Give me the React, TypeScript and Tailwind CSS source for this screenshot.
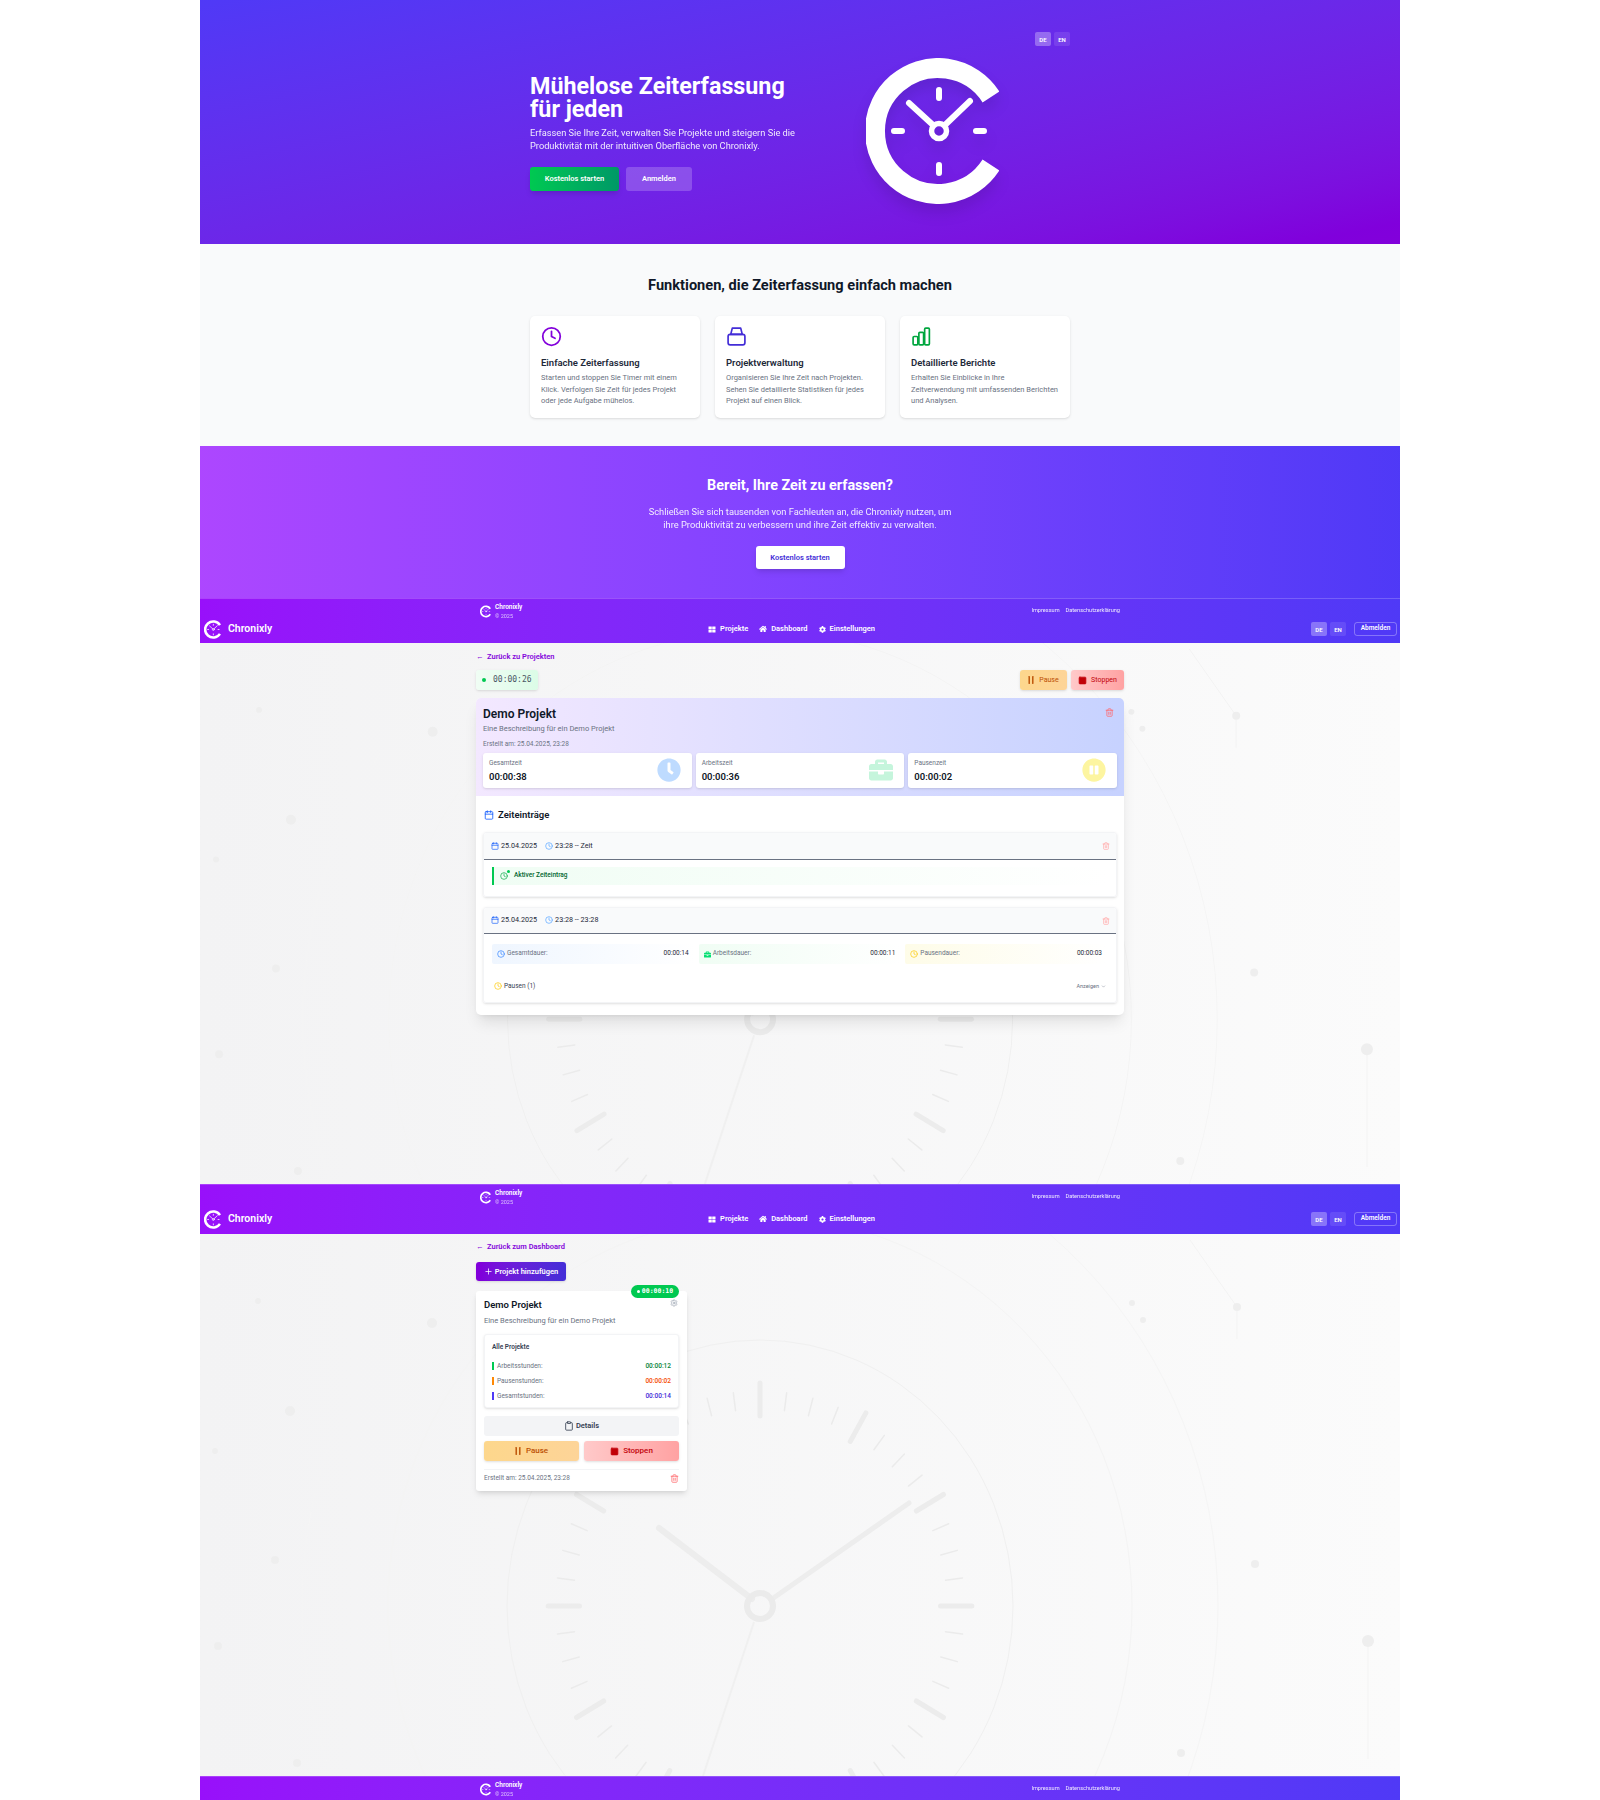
import { Calendar, Clock, Plus, Square, Trash2, Settings, Clipboard, ChevronDown } from 'lucide-react';
import { FaBriefcase, FaClock, FaCog, FaHome, FaPauseCircle, FaThLarge } from 'react-icons/fa';

// The C shaped clock, used big in the hero and small in the nav and footer
function LogoMark({ className }: { className: string }) {
  return (
    <svg viewBox="866 58 133 146" className={className} fill="none" stroke="#fff" strokeLinecap="round">
      <path d="M991 97 A63 63 0 1 0 991 165" strokeWidth="20" strokeLinecap="butt" />
      <path d="M939 90v8M939 165v8M894 131h8M976 131h8" strokeWidth="6" />
      <path d="M909 103 L933 125M970 101 L945 125" strokeWidth="6" />
      <circle cx="939" cy="131" r="7.5" strokeWidth="5.5" />
    </svg>
  );
}

function PauseBars({ className }: { className: string }) {
  return (
    <svg viewBox="0 0 6 8" className={className} fill="currentColor">
      <rect x="0.5" y="0" width="1.4" height="8" rx="0.4" />
      <rect x="4.1" y="0" width="1.4" height="8" rx="0.4" />
    </svg>
  );
}

// Faint clock and dots behind the two app pages
function Watermark({ cy }: { cy: number }) {
  const cx = 560;
  const ticks = Array.from({ length: 48 }, (_, i) => i);
  const dots = [
    [232, 89, 5], [90, 177, 5], [75, 326, 4], [15, 217, 3], [18, 412, 4], [97, 529, 4], [58, 67, 3],
    [1037, 73, 4], [1055, 330, 4], [1168, 407, 6], [981, 519, 4], [932, 69, 3], [943, 86, 3],
  ];
  return (
    <svg viewBox="0 0 1200 542" className="absolute inset-0 w-full h-full" fill="none">
      <ellipse cx={cx} cy={cy} rx="253" ry="266" stroke="#f0f0f0" strokeWidth="1" />
      <ellipse cx={cx} cy={cy} rx="372" ry="390" stroke="#f4f4f4" strokeWidth="1" />
      <ellipse cx={cx} cy={cy} rx="458" ry="480" stroke="#f5f5f5" strokeWidth="1" />
      <path d="M1037 73 L990 6M1037 73 V105M1168 407 V525" stroke="#f3f3f3" strokeWidth="1" />
      {ticks.map((i) => {
        const a = (i * 7.5 * Math.PI) / 180;
        const major = i % 4 === 0;
        const r1 = major ? 190 : 197;
        const r2 = major ? 223 : 215;
        return (
          <line
            key={i}
            x1={cx + Math.sin(a) * r1 * 0.95}
            y1={cy - Math.cos(a) * r1}
            x2={cx + Math.sin(a) * r2 * 0.95}
            y2={cy - Math.cos(a) * r2}
            stroke={major ? '#ececec' : '#ebebeb'}
            strokeWidth={major ? 5 : 1.5}
            strokeLinecap="round"
          />
        );
      })}
      <path d={`M${cx - 8} ${cy - 7} L${cx - 101} ${cy - 78}`} stroke="#ededed" strokeWidth="6" strokeLinecap="round" />
      <path d={`M${cx + 12} ${cy - 7} L${cx + 149} ${cy - 103}`} stroke="#ededed" strokeWidth="5" strokeLinecap="round" />
      <path d={`M${cx - 6} ${cy + 16} L${cx - 57} ${cy + 170}`} stroke="#f0f0f0" strokeWidth="2" />
      <circle cx={cx} cy={cy} r="13" stroke="#ebebeb" strokeWidth="6" />
      {dots.map(([x, y, r]) => (
        <circle key={`${x}-${y}`} cx={x} cy={y} r={r} fill="#eeeeee" />
      ))}
    </svg>
  );
}

function FooterRow() {
  return (
    <div className="w-[648px] mx-auto px-[4px] pt-[4px] h-[23px] flex items-start justify-between text-white">
      <div className="flex items-center gap-[4px]">
        <LogoMark className="w-[11px] h-[13px]" />
        <div className="flex flex-col">
          <span className="text-[6.5px] leading-[9px] font-semibold">Chronixly</span>
          <span className="text-[5.5px] leading-[8px] opacity-70">© 2025</span>
        </div>
      </div>
      <div className="flex items-center h-[15px] gap-[6px] text-[5.6px] opacity-90">
        <span>Impressum</span>
        <span>Datenschutzerklärung</span>
      </div>
    </div>
  );
}

function LangButtons() {
  return (
    <div className="flex gap-[3px] text-white text-[6px] font-semibold">
      <span className="w-[16px] h-[14px] rounded-[2px] bg-white/30 flex items-center justify-center">DE</span>
      <span className="w-[16px] h-[14px] rounded-[2px] bg-white/10 flex items-center justify-center">EN</span>
    </div>
  );
}

function NavBar({ bottomPad }: { bottomPad: string }) {
  return (
    <div className="bg-linear-to-r from-purple-600 to-indigo-600 border-t border-white/20">
      <FooterRow />
      <div className={`flex items-center justify-between pl-[4px] pr-[3px] ${bottomPad}`}>
        <div className="flex items-center gap-[7px] text-white">
          <LogoMark className="w-[17px] h-[19px] -my-[3px]" />
          <span className="text-[10.5px] leading-[14px] font-semibold">Chronixly</span>
        </div>
        <div className="flex items-center gap-[11px] text-white text-[7.5px] font-semibold">
          <span className="flex items-center gap-[4px]"><FaThLarge className="w-[8px] h-[7px]" />Projekte</span>
          <span className="flex items-center gap-[4px]"><FaHome className="w-[8px] h-[8px]" />Dashboard</span>
          <span className="flex items-center gap-[4px]"><FaCog className="w-[7px] h-[7px]" />Einstellungen</span>
        </div>
        <div className="flex items-center gap-[8px]">
          <LangButtons />
          <span className="w-[43px] h-[14px] rounded-[3px] border border-white/30 text-white text-[6.5px] font-semibold flex items-center justify-center">Abmelden</span>
        </div>
      </div>
    </div>
  );
}

function Hero() {
  return (
    <section className="h-[244px] bg-linear-to-br from-indigo-600 to-purple-700">
      <div className="w-[540px] mx-auto pt-[32px]">
        <div className="flex justify-end">
          <LangButtons />
        </div>
        <div className="flex items-center mt-[12px]">
          <div className="flex-1 text-white pt-[3px]">
            <h1 className="text-[23.3px] leading-[23px] font-bold">Mühelose Zeiterfassung<br />für jeden</h1>
            <p className="text-[9.25px] leading-[13.5px] mt-[5px] opacity-90">
              Erfassen Sie Ihre Zeit, verwalten Sie Projekte und steigern Sie die<br />
              Produktivität mit der intuitiven Oberfläche von Chronixly.
            </p>
            <div className="flex gap-[7px] mt-[14px] text-[7.5px] font-semibold">
              <span className="w-[89px] h-[24px] rounded-[3px] bg-linear-to-r from-green-500 to-emerald-600 shadow-md flex items-center justify-center">Kostenlos starten</span>
              <span className="w-[66px] h-[24px] rounded-[3px] bg-white/20 flex items-center justify-center">Anmelden</span>
            </div>
          </div>
          <LogoMark className="w-[133px] h-[146px] mr-[71px] drop-shadow-xl" />
        </div>
      </div>
    </section>
  );
}

const features = [
  {
    title: 'Einfache Zeiterfassung',
    text: 'Starten und stoppen Sie Timer mit einem Klick. Verfolgen Sie Zeit für jedes Projekt oder jede Aufgabe mühelos.',
    icon: <Clock className="w-[21px] h-[21px] text-purple-700" strokeWidth={2} />,
  },
  {
    title: 'Projektverwaltung',
    text: 'Organisieren Sie Ihre Zeit nach Projekten. Sehen Sie detaillierte Statistiken für jedes Projekt auf einen Blick.',
    icon: (
      <svg viewBox="0 0 20 20" className="w-[21px] h-[21px] text-indigo-700" fill="none" stroke="currentColor" strokeWidth="1.6" strokeLinejoin="round">
        <path d="M6 2h8l1.5 6h-11z" />
        <path d="M2 10a2 2 0 0 1 2-2h12a2 2 0 0 1 2 2v6a2 2 0 0 1-2 2H4a2 2 0 0 1-2-2z" />
      </svg>
    ),
  },
  {
    title: 'Detaillierte Berichte',
    text: 'Erhalten Sie Einblicke in Ihre Zeitverwendung mit umfassenden Berichten und Analysen.',
    icon: (
      <svg viewBox="0 0 20 20" className="w-[21px] h-[21px] text-green-600" fill="none" stroke="currentColor" strokeWidth="1.6">
        <rect x="2" y="10" width="4.5" height="8" rx="1" />
        <rect x="7.5" y="6" width="4.5" height="12" rx="1" />
        <rect x="13" y="2" width="4.5" height="16" rx="1" />
      </svg>
    ),
  },
];

function Features() {
  return (
    <section className="h-[202px] bg-gray-50 pt-[32px]">
      <h2 className="text-[14.6px] leading-[18px] font-bold text-gray-900 text-center">Funktionen, die Zeiterfassung einfach machen</h2>
      <div className="w-[540px] mx-auto mt-[22px] grid grid-cols-3 gap-[15px]">
        {features.map((f) => (
          <div key={f.title} className="h-[102px] bg-white rounded-[5px] shadow-sm px-[11px] pt-[10px]">
            {f.icon}
            <h3 className="text-[9.5px] leading-[14px] font-semibold text-gray-800 mt-[9px]">{f.title}</h3>
            <p className="text-[7.5px] leading-[11.5px] text-gray-500 mt-[2px]">{f.text}</p>
          </div>
        ))}
      </div>
    </section>
  );
}

function Cta() {
  return (
    <section className="h-[152px] bg-linear-to-r from-purple-500 to-indigo-600 pt-[31px] text-center text-white">
      <h2 className="text-[14.4px] leading-[18px] font-bold">Bereit, Ihre Zeit zu erfassen?</h2>
      <p className="text-[9.3px] leading-[13px] mt-[10px] opacity-90">
        Schließen Sie sich tausenden von Fachleuten an, die Chronixly nutzen, um<br />
        ihre Produktivität zu verbessern und ihre Zeit effektiv zu verwalten.
      </p>
      <span className="inline-flex w-[89px] h-[23px] mt-[15px] rounded-[3px] bg-white shadow-md text-indigo-700 text-[7.5px] font-semibold items-center justify-center">Kostenlos starten</span>
    </section>
  );
}

function ActionButtons({ big }: { big?: boolean }) {
  const text = big ? 'text-[8px] font-medium' : 'text-[7px]';
  const size = big ? 'flex-1' : '';
  return (
    <div className={big ? 'flex gap-[5px] mt-[5px]' : 'flex gap-[4px]'}>
      <span className={`${big ? 'h-[20px]' : 'w-[47px] h-[20px]'} ${size} rounded-[3px] bg-linear-to-r from-[#fdd78c] to-[#fdd498] text-amber-700 ${text} shadow-sm flex items-center justify-center gap-[5px]`}>
        <PauseBars className="w-[6px] h-[8px]" />Pause
      </span>
      <span className={`${big ? 'h-[20px]' : 'w-[53px] h-[20px]'} ${size} rounded-[3px] bg-linear-to-r from-red-200 to-red-300 text-red-700 ${text} shadow-sm flex items-center justify-center gap-[4px]`}>
        <Square className="w-[9px] h-[9px]" fill="currentColor" />Stoppen
      </span>
    </div>
  );
}

function BackLink({ label }: { label: string }) {
  return (
    <div className="flex items-center gap-[3px] text-[7.5px] leading-[10px] font-semibold text-purple-700">
      <span className="w-[8px]">←</span>{label}
    </div>
  );
}

function StatCard({ label, value, icon }: { label: string; value: string; icon: React.ReactNode }) {
  return (
    <div className="h-[35px] bg-white rounded-[3px] shadow-sm px-[6px] pt-[5px] flex justify-between">
      <div>
        <div className="text-[6.5px] leading-[10px] text-gray-500">{label}</div>
        <div className="text-[9.5px] leading-[12px] mt-[3px] font-semibold text-gray-900">{value}</div>
      </div>
      <div className="pr-[5px]">{icon}</div>
    </div>
  );
}

function EntryHeader({ time, height }: { time: string; height: string }) {
  return (
    <div className={`${height} bg-gray-50 border-b border-gray-500 rounded-t-[3px] pl-[7px] pr-[6px] flex items-center justify-between`}>
      <div className="flex items-center text-[7.2px] text-gray-800">
        <Calendar className="w-[8px] h-[8px] text-blue-600 mr-[2px]" />
        <span>25.04.2025</span>
        <Clock className="w-[8px] h-[8px] text-blue-400 ml-[8px] mr-[2px]" />
        <span>{time}</span>
      </div>
      <Trash2 className="w-[8px] h-[8px] text-red-300" />
    </div>
  );
}

function DurationCell({ label, value, icon, bg }: { label: string; value: string; icon: React.ReactNode; bg: string }) {
  return (
    <div className={`h-[20px] rounded-[2px] ${bg} pl-[5px] pr-[6px] flex items-center justify-between text-[6.5px]`}>
      <span className="flex items-center gap-[1px] text-gray-500">{icon}{label}:</span>
      <span className="text-gray-800">{value}</span>
    </div>
  );
}

function DetailPage() {
  return (
    <main className="relative h-[541px] overflow-hidden bg-linear-to-r from-[#f3f3f4] to-[#fbfbfb]">
      <Watermark cy={377} />
      <div className="relative w-[648px] mx-auto pt-[9px]">
        <BackLink label="Zurück zu Projekten" />
        <div className="flex justify-between mt-[8px]">
          <div className="w-[62px] h-[20px] rounded-[3px] bg-linear-to-r from-green-50 to-green-100 shadow-sm pl-[6px] flex items-center gap-[7px]">
            <span className="w-[4px] h-[4px] rounded-full bg-green-500" />
            <span className="font-['DejaVu_Sans_Mono',monospace] text-[8px] text-gray-600">00:00:26</span>
          </div>
          <ActionButtons />
        </div>
        <div className="mt-[8px] bg-white rounded-[5px] shadow-lg overflow-hidden">
          <div className="h-[98px] bg-linear-to-r from-purple-100 to-indigo-200 px-[7px] pt-[8px] relative">
            <h2 className="text-[12px] leading-[16px] font-semibold text-gray-900">Demo Projekt</h2>
            <p className="text-[7.5px] leading-[12px] mt-[1px] text-gray-500">Eine Beschreibung für ein Demo Projekt</p>
            <p className="text-[6.5px] leading-[10px] mt-[4px] text-gray-500">Erstellt am: 25.04.2025, 23:28</p>
            <div className="grid grid-cols-3 gap-[4px] mt-[4px]">
              <StatCard label="Gesamtzeit" value="00:00:38" icon={<FaClock className="w-[24px] h-[24px] text-blue-200" />} />
              <StatCard label="Arbeitszeit" value="00:00:36" icon={<FaBriefcase className="w-[24px] h-[24px] text-[#c5f5dc]" />} />
              <StatCard label="Pausenzeit" value="00:00:02" icon={<FaPauseCircle className="w-[24px] h-[24px] text-[#fdf5a0]" />} />
            </div>
            <Trash2 className="absolute top-[10px] right-[10px] w-[9px] h-[9px] text-red-400" />
          </div>
          <div className="px-[7px] pt-[12px] pb-[12px]">
            <div className="flex items-center gap-[4px] text-[9.5px] leading-[14px] font-semibold text-gray-900 pl-[1px]">
              <Calendar className="w-[10px] h-[10px] text-blue-600" />Zeiteinträge
            </div>
            <div className="mt-[10px] h-[65px] rounded-[3px] shadow-sm border border-gray-100">
              <EntryHeader time="23:28 -- Zeit" height="h-[27px]" />
              <div className="mt-[7px] mx-[8px] h-[18px] border-l-2 border-green-500 bg-linear-to-r from-green-50 to-white pl-[6px] flex items-center gap-[6px] text-[6.5px] font-medium text-green-800">
                <span className="relative">
                  <Clock className="w-[8px] h-[8px] text-green-600" />
                  <span className="absolute -top-[2px] -right-[2px] w-[3px] h-[3px] rounded-full bg-green-500" />
                </span>
                Aktiver Zeiteintrag
              </div>
            </div>
            <div className="mt-[10px] h-[96px] rounded-[3px] shadow-sm border border-gray-100">
              <EntryHeader time="23:28 -- 23:28" height="h-[26px]" />
              <div className="grid grid-cols-3 gap-[4px] mt-[10px] mx-[8px]">
                <DurationCell label="Gesamtdauer" value="00:00:14" bg="bg-linear-to-r from-blue-50 to-white" icon={<Clock className="w-[8px] h-[8px] text-blue-500 mr-[1px]" />} />
                <DurationCell label="Arbeitsdauer" value="00:00:11" bg="bg-linear-to-r from-green-50 to-white" icon={<FaBriefcase className="w-[7px] h-[7px] text-green-400 mr-[1px]" />} />
                <DurationCell label="Pausendauer" value="00:00:03" bg="bg-linear-to-r from-yellow-50 to-white" icon={<Clock className="w-[8px] h-[8px] text-yellow-400 mr-[1px]" />} />
              </div>
              <div className="flex items-center justify-between mt-[16px] mx-[10px] leading-[12px]">
                <span className="flex items-center gap-[2px] text-[6.5px] text-gray-700">
                  <Clock className="w-[8px] h-[8px] text-yellow-400" />Pausen (1)
                </span>
                <span className="flex items-center gap-[2px] text-[5.5px] text-gray-500">
                  Anzeigen<ChevronDown className="w-[5px] h-[5px]" />
                </span>
              </div>
            </div>
          </div>
        </div>
      </div>
    </main>
  );
}

function HoursRow({ label, value, bar, color }: { label: string; value: string; bar: string; color: string }) {
  return (
    <div className="flex items-center justify-between leading-[10px] text-[6.5px]">
      <span className="flex items-center gap-[3px] text-gray-500">
        <span className={`w-[2px] h-[8px] ${bar}`} />{label}:
      </span>
      <span className={`font-medium ${color}`}>{value}</span>
    </div>
  );
}

function ProjectsPage() {
  return (
    <main className="relative h-[542px] overflow-hidden bg-linear-to-r from-[#f3f3f4] to-[#fbfbfb]">
      <Watermark cy={372} />
      <div className="relative w-[648px] mx-auto pt-[8px]">
        <BackLink label="Zurück zum Dashboard" />
        <span className="mt-[10px] w-[90px] h-[19px] rounded-[3px] bg-linear-to-r from-purple-700 to-indigo-700 text-white text-[7.5px] font-semibold shadow-sm flex items-center justify-center gap-[2px]">
          <Plus className="w-[9px] h-[9px]" />Projekt hinzufügen
        </span>
        <div className="relative mt-[10px] w-[211px] h-[200px] bg-white rounded-[3px] shadow-md px-[8px] pt-[6px]">
          <span className="absolute -top-[6px] right-[8px] w-[48px] h-[13px] rounded-full bg-green-500 text-white font-['DejaVu_Sans_Mono',monospace] text-[6.5px] font-bold flex items-center justify-center gap-[2px]">
            <span className="w-[3px] h-[3px] rounded-full bg-white" />00:00:10
          </span>
          <Settings className="absolute top-[8px] right-[9px] w-[8px] h-[8px] text-gray-400" />
          <h2 className="text-[9.5px] leading-[16px] font-semibold text-gray-900">Demo Projekt</h2>
          <p className="text-[7.5px] leading-[12px] mt-[2px] text-gray-500">Eine Beschreibung für ein Demo Projekt</p>
          <div className="mt-[7px] h-[74px] rounded-[3px] bg-white shadow-sm border border-gray-100 px-[7px] pt-[7px]">
            <div className="text-[6.5px] leading-[10px] font-semibold text-gray-700">Alle Projekte</div>
            <div className="mt-[9px] flex flex-col gap-[5px]">
              <HoursRow label="Arbeitsstunden" value="00:00:12" bar="bg-green-500" color="text-green-700" />
              <HoursRow label="Pausenstunden" value="00:00:02" bar="bg-orange-400" color="text-orange-600" />
              <HoursRow label="Gesamtstunden" value="00:00:14" bar="bg-indigo-600" color="text-indigo-700" />
            </div>
          </div>
          <div className="mt-[8px] h-[20px] rounded-[3px] bg-gray-100 text-[7.5px] font-semibold text-gray-700 flex items-center justify-center gap-[2px]">
            <Clipboard className="w-[10px] h-[10px]" />Details
          </div>
          <ActionButtons big />
          <div className="mt-[8px] border-t border-gray-100 pt-[4px] flex items-center justify-between text-[6.5px] text-gray-500">
            <span>Erstellt am: 25.04.2025, 23:28</span>
            <Trash2 className="w-[9px] h-[9px] text-red-400" />
          </div>
        </div>
      </div>
    </main>
  );
}

export default function App() {
  return (
    <div className="w-[1200px] h-[1800px] mx-auto overflow-hidden font-['Roboto',sans-serif]">
      <Hero />
      <Features />
      <Cta />
      <NavBar bottomPad="pb-[7px]" />
      <DetailPage />
      <NavBar bottomPad="pt-[4px] pb-[8px]" />
      <ProjectsPage />
      <div className="h-[24px] bg-linear-to-r from-purple-600 to-indigo-600 border-t border-white/20">
        <FooterRow />
      </div>
    </div>
  );
}
